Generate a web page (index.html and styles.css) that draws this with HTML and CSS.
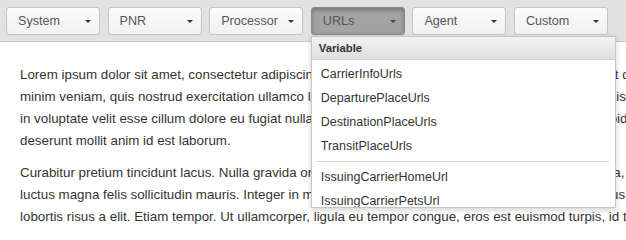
FILE: index.html
```html
<!DOCTYPE html>
<html lang="en">
<head>
<meta charset="utf-8">
<title>Variables</title>
<link rel="stylesheet" href="styles.css">
</head>
<body>
<div class="toolbar">
  <div class="group"><button class="btn"><span>System</span><i class="caret"></i></button></div>
  <div class="group"><button class="btn"><span>PNR</span><i class="caret"></i></button></div>
  <div class="group"><button class="btn"><span>Processor</span><i class="caret"></i></button></div>
  <div class="group open">
    <button class="btn active"><span>URLs</span><i class="caret"></i></button>
    <div class="menu">
      <div class="menu-header">Variable</div>
      <ul class="menu-list">
        <li>CarrierInfoUrls</li>
        <li>DeparturePlaceUrls</li>
        <li>DestinationPlaceUrls</li>
        <li>TransitPlaceUrls</li>
        <li class="divider"></li>
        <li>IssuingCarrierHomeUrl</li>
        <li>IssuingCarrierPetsUrl</li>
        <li>IssuingCarrierRulesUrl</li>
      </ul>
    </div>
  </div>
  <div class="group"><button class="btn"><span>Agent</span><i class="caret"></i></button></div>
  <div class="group"><button class="btn"><span>Custom</span><i class="caret"></i></button></div>
</div>
<div class="content">
  <p>Lorem ipsum dolor sit amet, consectetur adipiscing elit, sed do eiusmod tempor incididunt ut labore et dolore magna aliqua. Ut enim ad minim veniam, quis nostrud exercitation ullamco laboris nisi ut aliquip ex ea commodo consequat. Duis aute irure dolor in reprehenderit in voluptate velit esse cillum dolore eu fugiat nulla pariatur. Excepteur sint occaecat cupidatat non proident, sunt in culpa qui officia deserunt mollit anim id est laborum.</p>
  <p>Curabitur pretium tincidunt lacus. Nulla gravida orci a odio. Nullam varius, turpis et commodo pharetra, est eros bibendum elit, nec luctus magna felis sollicitudin mauris. Integer in mauris eu nibh euismod gravida. Duis ac tellus et risus vulputate vehicula. Donec lobortis risus a elit. Etiam tempor. Ut ullamcorper, ligula eu tempor congue, eros est euismod turpis, id tincidunt sapien risus a quam. Maecenas fermentum consequat mi. Donec fermentum.</p>
</div>
</body>
</html>
```

FILE: styles.css
```css
html, body {
  margin: 0;
  padding: 0;
  overflow: hidden;
  background: #fff;
}
body {
  font-family: "Liberation Sans", Arial, Helvetica, sans-serif;
  font-size: 13.35px;
  color: #333;
  width: 626px;
  height: 225px;
}
.toolbar {
  display: flex;
  gap: 7.6px;
  height: 42px;
  padding: 7px 0 0 6px;
  box-sizing: border-box;
  background: #e2e2e2;
  border-bottom: 1px solid #c9c9c9;
  position: relative;
  z-index: 2;
}
.group {
  position: relative;
}
.btn {
  width: 94px;
  height: 28px;
  display: flex;
  align-items: center;
  justify-content: space-between;
  padding: 0 8px 0 11px;
  box-sizing: border-box;
  border: 1px solid #c4c4c4;
  border-radius: 3px;
  background: linear-gradient(#fbfbfb, #f1f1f1);
  font-family: inherit;
  font-size: 12.6px;
  color: #555;
  margin: 0;
}
.caret {
  width: 0;
  height: 0;
  border-left: 3px solid transparent;
  border-right: 3px solid transparent;
  border-top: 3px solid #333;
}
.btn.active {
  background: #a3a3a3;
  border-color: #8a8a8a;
  box-shadow: inset 0 2px 4px rgba(0,0,0,0.3);
  color: #555;
}
.btn.active .caret {
  border-top-color: #444;
}
.menu {
  position: absolute;
  left: 0;
  top: 29px;
  width: 305px;
  height: 172px;
  box-sizing: border-box;
  overflow: hidden;
  background: #fff;
  border: 1px solid #c6c6c6;
  box-shadow: 0 2px 6px rgba(0,0,0,0.18);
}
.menu-header {
  height: 22px;
  line-height: 22px;
  padding-left: 7px;
  font-size: 11.3px;
  font-weight: bold;
  color: #333;
  background: linear-gradient(#f3f3f3, #dedede);
  border-bottom: 1px solid #cfcfcf;
}
.menu-list {
  list-style: none;
  margin: 0;
  padding: 2px 0 0;
  font-size: 12.5px;
}
.menu-list li {
  height: 24px;
  line-height: 24px;
  padding-left: 9px;
  color: #333;
  white-space: nowrap;
}
.menu-list li.divider {
  height: 1px;
  margin: 3px 6px 3px 5px;
  background: #d5d5d5;
}
.content {
  width: 801px;
  padding: 0 20px;
}
.content p {
  margin: 22px 0 0;
  line-height: 22px;
}
.content p + p {
  margin-top: 10px;
}
```
